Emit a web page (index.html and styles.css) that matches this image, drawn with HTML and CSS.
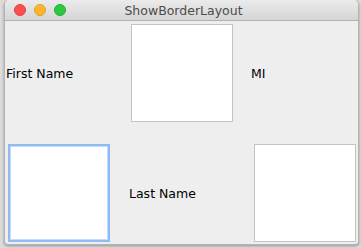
FILE: index.html
```html
<!DOCTYPE html>
<html lang="en">
<head>
    <meta charset="UTF-8">
    <meta name="viewport" content="width=device-width, initial-scale=1.0">
    <title>ShowBorderLayout</title>
    <link rel="stylesheet" href="styles.css">
</head>
<body>

<div class="window">
    <div class="titlebar">
        <div class="lights">
            <span class="light red"></span>
            <span class="light yellow"></span>
            <span class="light green"></span>
        </div>
        <div class="title">ShowBorderLayout</div>
    </div>

    <div class="content">
        <label class="cell label first">First Name</label>
        <input type="text" class="cell field top">
        <label class="cell label mi">MI</label>

        <input type="text" class="cell field focused left">
        <label class="cell label last">Last Name</label>
        <input type="text" class="cell field right">
    </div>
</div>

</body>
</html>
```

FILE: styles.css
```css
/* Reset */
* {
    margin: 0;
    padding: 0;
    box-sizing: border-box;
}

/* Desktop behind the window */
body {
    font-family: 'DejaVu Sans', 'Liberation Sans', sans-serif;
    background: #dcdcdc;
    width: 361px;
    height: 248px;
    overflow: hidden;
}

/* Window frame */
.window {
    width: 355px;
    height: 245px;
    margin-left: 4px;
    background: #eeeeee;
    border: 1px solid #b4b4b4;
    border-top: none;
    border-radius: 5px 5px 4px 4px;
    box-shadow: 0 1px 3px rgba(0, 0, 0, 0.35);
    overflow: hidden;
}

/* Title bar */
.titlebar {
    height: 21px;
    background: linear-gradient(#ebebeb, #d5d5d5);
    border-bottom: 1px solid #b1b1b1;
    display: flex;
    align-items: center;
    position: relative;
}

.lights {
    display: flex;
    gap: 8px;
    padding-left: 9px;
}

.light {
    width: 12px;
    height: 12px;
    border-radius: 50%;
    display: block;
}

.red { background: #fc4e4f; border: 1px solid #e2403f; }
.yellow { background: #fdb52b; border: 1px solid #dea025; }
.green { background: #2ac940; border: 1px solid #22ad34; }

.title {
    position: absolute;
    left: 0;
    right: 0;
    text-align: center;
    font-size: 12.5px;
    color: #4b4b4b;
    padding-left: 4px;
}

/* Content grid */
.content {
    display: grid;
    grid-template-columns: 118px 118px 117px;
    grid-template-rows: 112px 110px;
    height: 222px;
}

.label {
    font-size: 12.5px;
    color: #000;
    align-self: center;
}

.field {
    width: 102px;
    height: 98px;
    background: #fff;
    border: 1px solid #c3c3c3;
    outline: none;
}

.first { margin: 0 0 8px 1px; }
.mi { margin: 0 0 8px 10px; }
.last { margin: 10px 0 0 6px; }

.top { margin: 3px 0 0 8px; }
.left { margin: 11px 0 0 3px; }
.right { margin: 11px 0 0 13px; }

/* Focused text field */
.focused {
    border: 2px solid #8fbaf2;
    box-shadow: inset 0 0 0 1px #c6dcf8;
}
```
